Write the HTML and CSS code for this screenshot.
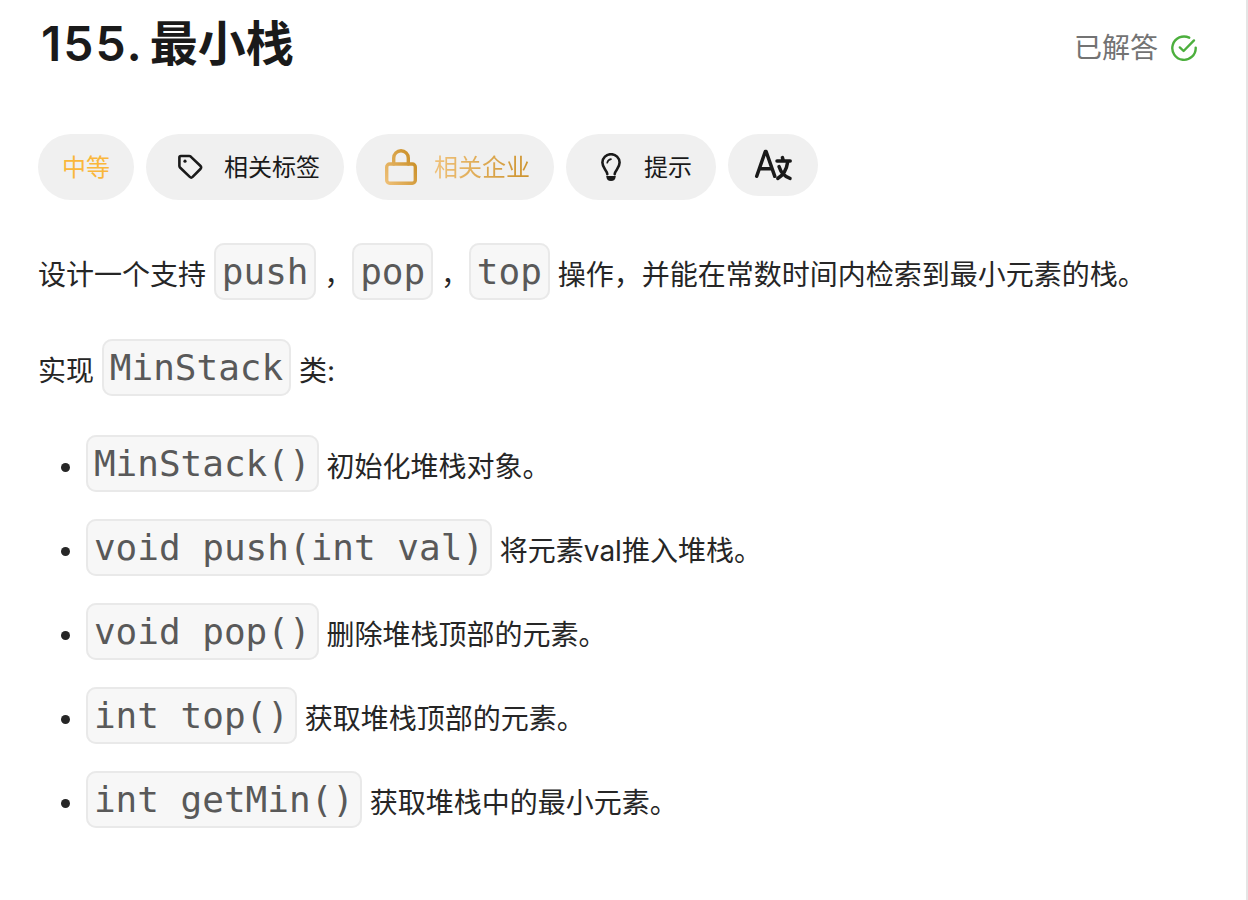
FILE: index.html
```html
<!DOCTYPE html>
<html lang="zh-CN">

<head>
    <meta charset="UTF-8">
    <meta name="viewport" content="width=device-width, initial-scale=1.0">
    <title>155. 最小栈</title>
    <link rel="stylesheet" href="styles.css">
</head>

<body>
    <main class="panel">
        <header class="header">
            <h1><span class="number">155.</span>最小栈</h1>
            <div class="status">
                <span>已解答</span>
                <svg class="icon-check" viewBox="0 0 28 28" width="28" height="28">
                    <path d="M19.2 3.7A11.7 11.7 0 1 0 25.7 13.6" />
                    <path d="M9.8 13.4l3.8 3.6L24 6.4" />
                </svg>
            </div>
        </header>

        <!-- Etiquetas -->
        <div class="tags">
            <div class="tag tag-medium"><span>中等</span></div>
            <div class="tag">
                <svg class="icon-label" viewBox="0 0 28 28" width="28" height="28">
                    <path d="M3.4 4.5Q3.4 3 4.9 3H13.2Q14 3 14.7 3.6L24.3 12.8Q26 14.4 24.4 16L16.6 23.9Q15.2 25.2 13.8 23.9L4 14.5Q3.4 13.9 3.4 13Z" />
                    <circle cx="9" cy="8.2" r="1.6" />
                </svg>
                <span>相关标签</span>
            </div>
            <div class="tag">
                <svg class="icon-lock" viewBox="0 0 32 36" width="32" height="36">
                    <defs>
                        <linearGradient id="gold" x1="0" y1="36" x2="32" y2="18" gradientUnits="userSpaceOnUse">
                            <stop offset="0" stop-color="#f0c27b" />
                            <stop offset="1" stop-color="#cc922c" />
                        </linearGradient>
                    </defs>
                    <rect x="1.7" y="15" width="28.6" height="19.3" rx="3" />
                    <path d="M8.7 15V9a7.3 7.3 0 0 1 14.6 0v6" />
                </svg>
                <span class="gold-text">相关企业</span>
            </div>
            <div class="tag">
                <svg class="icon-bulb" viewBox="0 0 28 28" width="28" height="28">
                    <path d="M10.3 21.2C9.9 17 5.4 15.2 5.4 9.6a8.6 8.4 0 0 1 17.2 0C22.6 15.2 18.1 17 17.7 21.2" />
                    <path class="thin" d="M10.2 9.8Q10.8 6.8 14 6.1" />
                    <path class="base" d="M9.3 22.9H18.7V23.8Q18.3 28 14 28T9.3 23.8Z" />
                </svg>
                <span>提示</span>
            </div>
            <div class="tag tag-lang">
                <svg class="icon-lang" viewBox="0 0 40 34" width="40" height="34">
                    <path d="M3.7 28.3L12.3 3.5H13.1L21.8 28.3M7 20.8H18.6" />
                    <path d="M24 13.1H37.2M29.4 9.6L30.4 13M34.8 13.6C33.6 21.6 30 27.6 24.8 30.4M26 18.6C28 25 31.8 28.8 37 30.4" />
                </svg>
            </div>
        </div>

        <!-- Enunciado -->
        <section class="content">
            <p>设计一个支持 <code>push</code> ，<code>pop</code> ，<code>top</code> 操作，并能在常数时间内检索到最小元素的栈。</p>
            <p>实现 <code>MinStack</code> 类:</p>
            <ul>
                <li><code>MinStack()</code> 初始化堆栈对象。</li>
                <li><code>void push(int val)</code> 将元素val推入堆栈。</li>
                <li><code>void pop()</code> 删除堆栈顶部的元素。</li>
                <li><code>int top()</code> 获取堆栈顶部的元素。</li>
                <li><code>int getMin()</code> 获取堆栈中的最小元素。</li>
            </ul>
        </section>
    </main>
</body>

</html>
```
FILE: styles.css
```css
* {
    box-sizing: border-box;
    margin: 0;
    padding: 0;
}

body {
    font-family: Inter, 'Noto Sans CJK SC', sans-serif;
    background-color: #fff;
    color: #262626;
}

.panel {
    height: 100vh;
    padding: 12px 48px 0 38px;
    border-right: 2px solid #e5e5e5;
    overflow: hidden;
}

/* Cabecera */
.header {
    display: flex;
    justify-content: space-between;
    align-items: center;
    height: 64px;
}

h1 {
    font-size: 48px;
    font-weight: 600;
    line-height: 64px;
    color: #1a1a1a;
}

.number {
    margin-left: 3px;
    margin-right: 6px;
    letter-spacing: 2px;
}

.status {
    display: flex;
    align-items: center;
    gap: 12px;
    margin-top: 8px;
    font-size: 28px;
    line-height: 40px;
    color: #737373;
}

svg {
    display: block;
    flex: none;
    fill: none;
    stroke: #1a1a1a;
    stroke-width: 2.6;
    stroke-linecap: round;
    stroke-linejoin: round;
}

.icon-check {
    stroke: #4caf3d;
    stroke-width: 2.4;
}

/* Etiquetas */
.tags {
    display: flex;
    align-items: flex-start;
    gap: 12px;
    margin-top: 58px;
}

.tag {
    display: flex;
    align-items: center;
    height: 66px;
    padding: 0 24px;
    border-radius: 33px;
    background-color: #f0f0f0;
    font-size: 24px;
    line-height: 32px;
    color: #1a1a1a;
}

.tag span {
    padding-top: 2px;
}

.tag-medium {
    color: #fab73b;
}

.tag-lang {
    height: 62px;
    padding: 0 25px;
}

.icon-label {
    margin: 0 20px 0 6px;
}

.icon-label circle {
    fill: #1a1a1a;
    stroke: none;
}

.icon-lock {
    margin: 0 17px 0 5px;
    stroke: url(#gold);
    stroke-width: 3.4;
}

.gold-text {
    background: linear-gradient(100deg, #f0c27b, #cc922c);
    -webkit-background-clip: text;
    background-clip: text;
    color: transparent;
}

.icon-bulb {
    margin: 0 19px 0 7px;
}

.icon-bulb .thin {
    stroke-width: 1.6;
}

.icon-bulb .base {
    fill: #1a1a1a;
    stroke: none;
}

.icon-lang {
    stroke-width: 3.5;
}

/* Enunciado */
.content {
    margin-top: 45px;
    font-size: 28px;
    line-height: 60px;
}

.content p {
    height: 60px;
    margin-bottom: 36px;
}

ul {
    padding-left: 48px;
}

li {
    height: 60px;
    margin-bottom: 24px;
}

code {
    padding: 5.6px 5.9px;
    border: 2px solid #e9e9e9;
    border-radius: 10px;
    background-color: #f7f7f7;
    font-family: 'DejaVu Sans Mono', monospace;
    font-size: 36px;
    line-height: 1;
    vertical-align: 1px;
    color: #595959;
}
```
